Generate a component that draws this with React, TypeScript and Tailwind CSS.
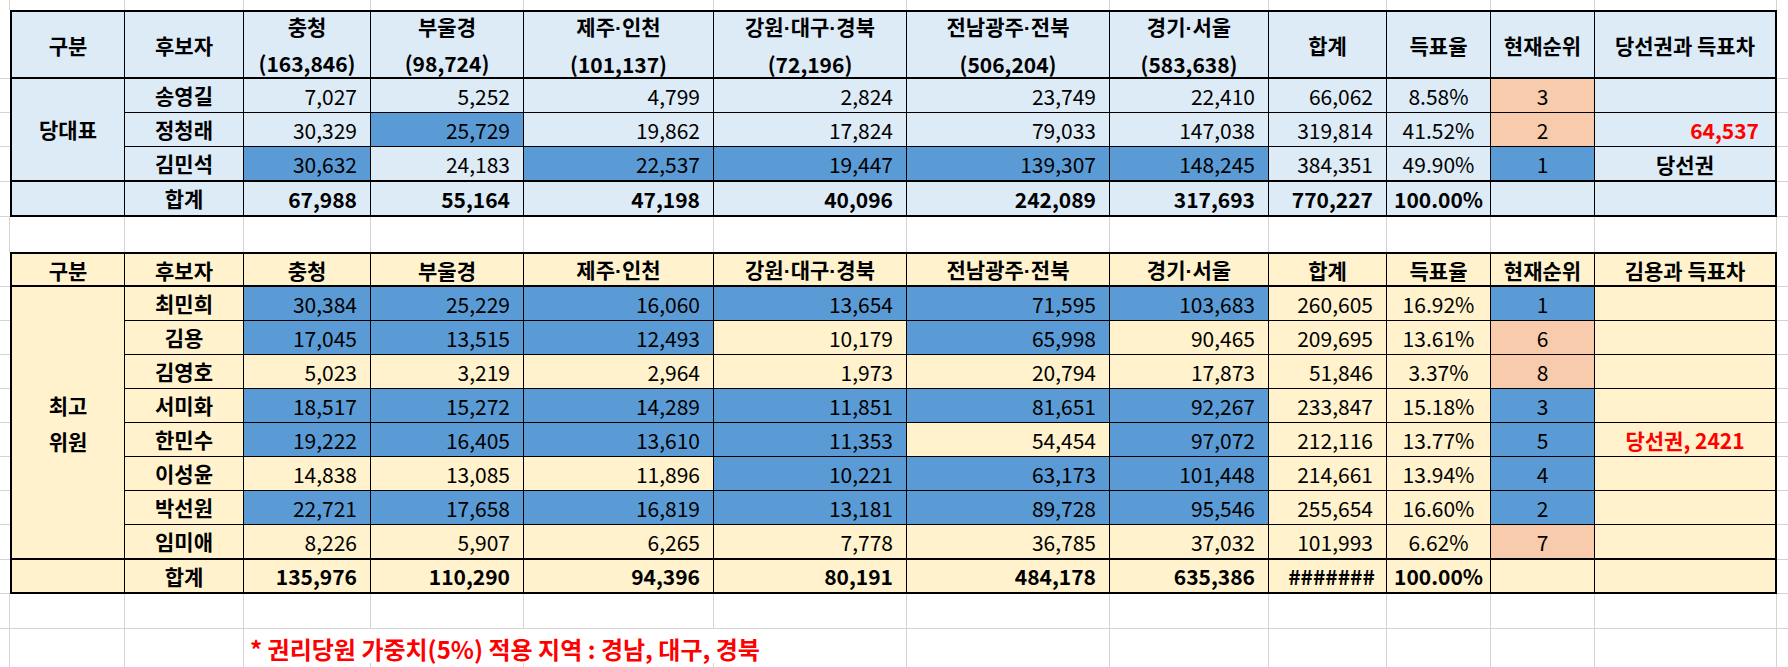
import type { ReactNode } from "react";

type Fill = "" | "b" | "o";

type Row = {
  name: string;
  vals: [string, Fill][];
  sum: string;
  pct: string;
  rank: [string, Fill];
  note?: ReactNode;
};

// column widths of the two tables (each includes its own 1px right rule)
const COLS =
  "grid-cols-[113px_119px_127px_153px_190px_193px_203px_159px_118px_104px_104px_180px]";
// sheet columns for the empty excel rows around the tables
const SHEET =
  "grid-cols-[10px_115px_119px_127px_153px_190px_193px_203px_159px_118px_104px_104px_182px_1fr]";

const fillClass = (f: Fill) =>
  f === "b" ? "bg-[#5b9bd5]" : f === "o" ? "bg-[#f8cbad]" : "";

const upperHead: string[][] = [
  ["구분"],
  ["후보자"],
  ["충청", "(163,846)"],
  ["부울경", "(98,724)"],
  ["제주·인천", "(101,137)"],
  ["강원·대구·경북", "(72,196)"],
  ["전남광주·전북", "(506,204)"],
  ["경기·서울", "(583,638)"],
  ["합계"],
  ["득표율"],
  ["현재순위"],
  ["당선권과 득표차"],
];

const lowerHead: string[][] = [
  ["구분"],
  ["후보자"],
  ["충청"],
  ["부울경"],
  ["제주·인천"],
  ["강원·대구·경북"],
  ["전남광주·전북"],
  ["경기·서울"],
  ["합계"],
  ["득표율"],
  ["현재순위"],
  ["김용과 득표차"],
];

const upperRows: Row[] = [
  {
    name: "송영길",
    vals: [["7,027", ""], ["5,252", ""], ["4,799", ""], ["2,824", ""], ["23,749", ""], ["22,410", ""]],
    sum: "66,062",
    pct: "8.58%",
    rank: ["3", "o"],
  },
  {
    name: "정청래",
    vals: [["30,329", ""], ["25,729", "b"], ["19,862", ""], ["17,824", ""], ["79,033", ""], ["147,038", ""]],
    sum: "319,814",
    pct: "41.52%",
    rank: ["2", "o"],
    note: <span className="ml-auto pr-[16px] font-bold text-[#ff0000]">64,537</span>,
  },
  {
    name: "김민석",
    vals: [["30,632", "b"], ["24,183", ""], ["22,537", "b"], ["19,447", "b"], ["139,307", "b"], ["148,245", "b"]],
    sum: "384,351",
    pct: "49.90%",
    rank: ["1", "b"],
    note: <span className="mx-auto font-bold">당선권</span>,
  },
];

const lowerRows: Row[] = [
  {
    name: "최민희",
    vals: [["30,384", "b"], ["25,229", "b"], ["16,060", "b"], ["13,654", "b"], ["71,595", "b"], ["103,683", "b"]],
    sum: "260,605",
    pct: "16.92%",
    rank: ["1", "b"],
  },
  {
    name: "김용",
    vals: [["17,045", "b"], ["13,515", "b"], ["12,493", "b"], ["10,179", ""], ["65,998", "b"], ["90,465", ""]],
    sum: "209,695",
    pct: "13.61%",
    rank: ["6", "o"],
  },
  {
    name: "김영호",
    vals: [["5,023", ""], ["3,219", ""], ["2,964", ""], ["1,973", ""], ["20,794", ""], ["17,873", ""]],
    sum: "51,846",
    pct: "3.37%",
    rank: ["8", "o"],
  },
  {
    name: "서미화",
    vals: [["18,517", "b"], ["15,272", "b"], ["14,289", "b"], ["11,851", "b"], ["81,651", "b"], ["92,267", "b"]],
    sum: "233,847",
    pct: "15.18%",
    rank: ["3", "b"],
  },
  {
    name: "한민수",
    vals: [["19,222", "b"], ["16,405", "b"], ["13,610", "b"], ["11,353", "b"], ["54,454", ""], ["97,072", "b"]],
    sum: "212,116",
    pct: "13.77%",
    rank: ["5", "b"],
    note: <span className="mx-auto font-bold text-[#ff0000]">당선권, 2421</span>,
  },
  {
    name: "이성윤",
    vals: [["14,838", ""], ["13,085", ""], ["11,896", ""], ["10,221", "b"], ["63,173", "b"], ["101,448", "b"]],
    sum: "214,661",
    pct: "13.94%",
    rank: ["4", "b"],
  },
  {
    name: "박선원",
    vals: [["22,721", "b"], ["17,658", "b"], ["16,819", "b"], ["13,181", "b"], ["89,728", "b"], ["95,546", "b"]],
    sum: "255,654",
    pct: "16.60%",
    rank: ["2", "b"],
  },
  {
    name: "임미애",
    vals: [["8,226", ""], ["5,907", ""], ["6,265", ""], ["7,778", ""], ["36,785", ""], ["37,032", ""]],
    sum: "101,993",
    pct: "6.62%",
    rank: ["7", "o"],
  },
];

// the middle dot is narrow in the sheet's font, so draw it with a latin face
function Dotted({ text }: { text: string }) {
  const parts = text.split("·");
  return (
    <span>
      {parts.map((p, i) => (
        <span key={i}>
          {i > 0 && <span className="font-['Liberation_Sans',sans-serif]">·</span>}
          {p}
        </span>
      ))}
    </span>
  );
}

function C({ children, className = "" }: { children?: ReactNode; className?: string }) {
  return (
    <div className={`flex items-center whitespace-nowrap border-black ${className}`}>
      {children}
    </div>
  );
}

function Table({
  head,
  rows,
  group,
  totals,
  bg,
  gridRows,
}: {
  head: string[][];
  rows: Row[];
  group: ReactNode;
  totals: string[];
  bg: string;
  gridRows: string;
}) {
  return (
    <div className={`grid ${COLS} ${gridRows} w-[1767px] border-2 border-black ${bg}`}>
      {head.map((lines, i) => (
        <C
          key={i}
          className={`flex-col justify-center font-bold leading-[37px] pt-[1px] border-b-2 ${
            i < head.length - 1 ? "border-r" : ""
          }`}
        >
          {lines.map((l) => (
            <Dotted key={l} text={l} />
          ))}
        </C>
      ))}

      {rows.map((r, i) => {
        const b = i === rows.length - 1 ? "border-b-2" : "border-b";
        return [
          i === 0 ? group : null,
          <C key={`n${i}`} className={`border-r ${b} justify-center pt-[1px] font-bold`}>
            {r.name}
          </C>,
          ...r.vals.map(([v, f], j) => (
            <C
              key={`v${i}-${j}`}
              className={`border-r ${b} justify-end pr-[13px] pt-[2px] ${fillClass(f)}`}
            >
              {v}
            </C>
          )),
          <C key={`s${i}`} className={`border-r ${b} justify-end pr-[13px] pt-[2px]`}>
            {r.sum}
          </C>,
          <C key={`p${i}`} className={`border-r ${b} justify-center pt-[2px]`}>
            {r.pct}
          </C>,
          <C key={`r${i}`} className={`border-r ${b} justify-center pt-[2px] ${fillClass(r.rank[1])}`}>
            {r.rank[0]}
          </C>,
          <C key={`x${i}`} className={`${b} pt-[2px]`}>
            {r.note}
          </C>,
        ];
      })}

      {/* total row */}
      <C className="border-r" />
      <C className="border-r justify-center font-bold pt-[1px]">합계</C>
      {totals.slice(0, 6).map((t, j) => (
        <C key={j} className="border-r justify-end pr-[13px] pt-[2px] font-bold">
          {t}
        </C>
      ))}
      <C
        className={`border-r font-bold pt-[2px] ${
          totals[6].startsWith("#") ? "justify-center pl-[8px]" : "justify-end pr-[13px]"
        }`}
      >
        {totals[6]}
      </C>
      <C className="border-r justify-center pt-[2px] font-bold">{totals[7]}</C>
      <C className="border-r" />
      <C />
    </div>
  );
}

function Side({ rows, className }: { rows: string[]; className: string }) {
  return (
    <div className={`flex flex-col ${className}`}>
      {rows.map((h, i) => (
        <div key={i} className={`${h} border-b border-[#d4d4d4]`} />
      ))}
    </div>
  );
}

function SheetRow({ h, bottom = false }: { h: string; bottom?: boolean }) {
  return (
    <div className={`grid ${SHEET} ${h}`}>
      {Array.from({ length: 14 }).map((_, i) => (
        <div
          key={i}
          className={`border-[#d4d4d4] ${i < 13 ? "border-r" : ""} ${bottom ? "border-b" : ""}`}
        />
      ))}
    </div>
  );
}

const upperSide = ["h-[69px]", "h-[34px]", "h-[34px]", "h-[35px]", "h-[35px]"];
const lowerSide = [
  "h-[35px]",
  "h-[34px]",
  "h-[34px]",
  "h-[34px]",
  "h-[34px]",
  "h-[34px]",
  "h-[34px]",
  "h-[34px]",
  "h-[35px]",
  "h-[34px]",
];

export default function App() {
  return (
    <div className="w-[1788px] h-[667px] overflow-hidden bg-white text-[21px] text-black font-['Noto_Sans_CJK_KR','Noto_Sans',sans-serif]">
      <SheetRow h="h-[10px]" />

      <div className="flex">
        <Side rows={upperSide} className="w-[10px]" />
        <Table
          head={upperHead}
          rows={upperRows}
          bg="bg-[#ddebf7]"
          gridRows="grid-rows-[67px_34px_34px_35px_33px]"
          group={
            <C key="g" className="row-span-3 border-r border-b-2 justify-center font-bold">
              당대표
            </C>
          }
          totals={["67,988", "55,164", "47,198", "40,096", "242,089", "317,693", "770,227", "100.00%"]}
        />
        <Side rows={upperSide} className="flex-1" />
      </div>

      <SheetRow h="h-[35px]" />

      <div className="flex">
        <Side rows={lowerSide} className="w-[10px]" />
        <Table
          head={lowerHead}
          rows={lowerRows}
          bg="bg-[#fff2cc]"
          gridRows="grid-rows-[33px_34px_34px_34px_34px_34px_34px_34px_35px_32px]"
          group={
            <C
              key="g"
              className="row-span-8 border-r border-b-2 flex-col justify-center font-bold leading-[36px]"
            >
              <span>최고</span>
              <span>위원</span>
            </C>
          }
          totals={["135,976", "110,290", "94,396", "80,191", "484,178", "635,386", "#######", "100.00%"]}
        />
        <Side rows={lowerSide} className="flex-1" />
      </div>

      <SheetRow h="h-[35px]" bottom />

      <div className={`grid ${SHEET} h-[34px]`}>
        <div className="border-r border-b border-[#d4d4d4]" />
        <div className="border-r border-b border-[#d4d4d4]" />
        <div className="border-r border-b border-[#d4d4d4]" />
        <div className="col-span-4 flex items-center border-r border-b border-[#d4d4d4] pl-[6px] pt-[2px] whitespace-nowrap text-[24px] font-bold text-[#ff0000]">
          * 권리당원 가중치(5%) 적용 지역 : 경남, 대구, 경북
        </div>
        {Array.from({ length: 7 }).map((_, i) => (
          <div key={i} className={`border-b border-[#d4d4d4] ${i < 6 ? "border-r" : ""}`} />
        ))}
      </div>

      <SheetRow h="h-[4px]" />
    </div>
  );
}
